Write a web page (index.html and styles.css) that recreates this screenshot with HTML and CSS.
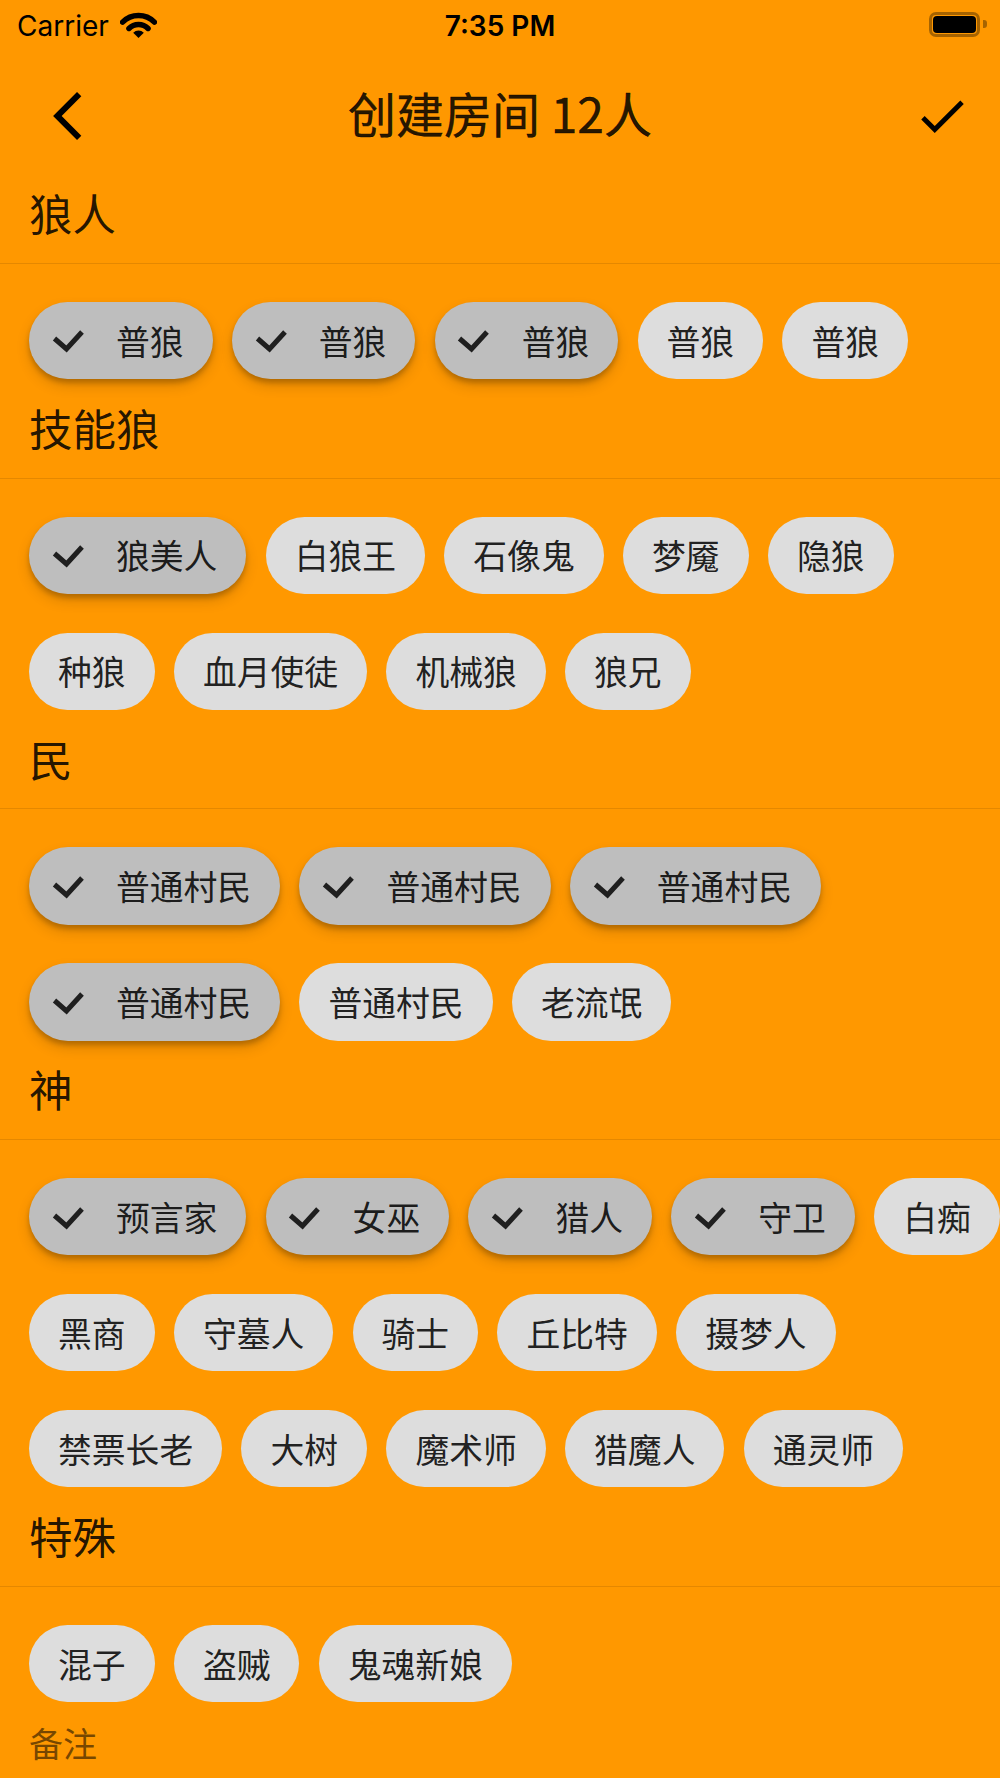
FILE: index.html
```html
<!DOCTYPE html>
<html lang="zh-CN">
<head>
<meta charset="utf-8">
<title>创建房间</title>
<link rel="stylesheet" href="styles.css">
</head>
<body>
<div class="screen">
  <div class="status">
    <div class="status-left">
      <span class="carrier">Carrier</span>
      <svg class="wifi" width="37" height="27" viewBox="0 0 37 27">
        <path d="M2.6 11.1 A22.5 22.5 0 0 1 34.4 11.1" fill="none" stroke="#000" stroke-width="5.5" stroke-linecap="round"/>
        <path d="M8.95 17.45 A13.5 13.5 0 0 1 28.05 17.45" fill="none" stroke="#000" stroke-width="5.5" stroke-linecap="round"/>
        <path d="M18.5 27 L13.2 21.7 A7.5 7.5 0 0 1 23.8 21.7 Z" fill="#000"/>
      </svg>
    </div>
    <span class="time">7:35 PM</span>
    <div class="status-right">
      <div class="battery"><div class="battery-fill"></div></div>
      <div class="battery-nub"></div>
    </div>
  </div>

  <div class="nav">
    <div class="nav-lead">
      <svg width="58" height="58" viewBox="0 0 24 24"><path d="M17.51 3.87L15.73 2.1 5.84 12l9.9 9.9 1.77-1.77L9.38 12l8.13-8.13z" fill="#000"/></svg>
    </div>
    <div class="nav-title">创建房间 12人</div>
    <div class="nav-action">
      <svg width="58" height="58" viewBox="0 0 24 24"><path d="M9 16.17L4.83 12l-1.42 1.41L9 19 21 7l-1.41-1.41z" fill="#000"/></svg>
    </div>
  </div>

  <div class="section-title">狼人</div>
  <div class="divider"></div>
  <div class="chips">
    <span class="chip sel"><svg class="tick" viewBox="0 0 58 58"><polyline points="15.5,27.5 27.5,38 43,21"/></svg>普狼</span>
    <span class="chip sel"><svg class="tick" viewBox="0 0 58 58"><polyline points="15.5,27.5 27.5,38 43,21"/></svg>普狼</span>
    <span class="chip sel"><svg class="tick" viewBox="0 0 58 58"><polyline points="15.5,27.5 27.5,38 43,21"/></svg>普狼</span>
    <span class="chip">普狼</span>
    <span class="chip">普狼</span>
  </div>

  <div class="section-title">技能狼</div>
  <div class="divider"></div>
  <div class="chips">
    <span class="chip sel"><svg class="tick" viewBox="0 0 58 58"><polyline points="15.5,27.5 27.5,38 43,21"/></svg>狼美人</span>
    <span class="chip">白狼王</span>
    <span class="chip">石像鬼</span>
    <span class="chip">梦魇</span>
    <span class="chip">隐狼</span>
    <span class="chip">种狼</span>
    <span class="chip">血月使徒</span>
    <span class="chip">机械狼</span>
    <span class="chip">狼兄</span>
  </div>

  <div class="section-title">民</div>
  <div class="divider"></div>
  <div class="chips">
    <span class="chip sel"><svg class="tick" viewBox="0 0 58 58"><polyline points="15.5,27.5 27.5,38 43,21"/></svg>普通村民</span>
    <span class="chip sel"><svg class="tick" viewBox="0 0 58 58"><polyline points="15.5,27.5 27.5,38 43,21"/></svg>普通村民</span>
    <span class="chip sel"><svg class="tick" viewBox="0 0 58 58"><polyline points="15.5,27.5 27.5,38 43,21"/></svg>普通村民</span>
    <span class="chip sel"><svg class="tick" viewBox="0 0 58 58"><polyline points="15.5,27.5 27.5,38 43,21"/></svg>普通村民</span>
    <span class="chip">普通村民</span>
    <span class="chip">老流氓</span>
  </div>

  <div class="section-title">神</div>
  <div class="divider"></div>
  <div class="chips">
    <span class="chip sel"><svg class="tick" viewBox="0 0 58 58"><polyline points="15.5,27.5 27.5,38 43,21"/></svg>预言家</span>
    <span class="chip sel"><svg class="tick" viewBox="0 0 58 58"><polyline points="15.5,27.5 27.5,38 43,21"/></svg>女巫</span>
    <span class="chip sel"><svg class="tick" viewBox="0 0 58 58"><polyline points="15.5,27.5 27.5,38 43,21"/></svg>猎人</span>
    <span class="chip sel"><svg class="tick" viewBox="0 0 58 58"><polyline points="15.5,27.5 27.5,38 43,21"/></svg>守卫</span>
    <span class="chip">白痴</span>
    <span class="chip">黑商</span>
    <span class="chip">守墓人</span>
    <span class="chip">骑士</span>
    <span class="chip">丘比特</span>
    <span class="chip">摄梦人</span>
    <span class="chip">禁票长老</span>
    <span class="chip">大树</span>
    <span class="chip">魔术师</span>
    <span class="chip">猎魔人</span>
    <span class="chip">通灵师</span>
  </div>

  <div class="section-title">特殊</div>
  <div class="divider"></div>
  <div class="chips">
    <span class="chip">混子</span>
    <span class="chip">盗贼</span>
    <span class="chip">鬼魂新娘</span>
  </div>

  <div class="note">备注</div>
</div>
</body>
</html>
```

FILE: styles.css
```css
html, body {
  margin: 0;
  padding: 0;
}
body {
  background: #ff9800;
  width: 1000px;
  height: 1778px;
  overflow: hidden;
  font-family: "Noto Sans CJK SC", "Noto Sans", sans-serif;
}
.screen {
  width: 1000px;
  height: 1778px;
  overflow: hidden;
  background: #ff9800;
}

/* status bar */
.status {
  height: 48px;
  box-sizing: border-box;
  padding-top: 3px;
  display: grid;
  grid-template-columns: 1fr auto 1fr;
  align-items: center;
  font-family: "Inter", "Liberation Sans", sans-serif;
  color: #000;
}
.status-left {
  display: flex;
  align-items: center;
  padding-left: 17px;
}
.carrier {
  font-size: 28px;
  font-weight: 400;
  line-height: 1;
}
.wifi {
  margin-left: 11px;
  margin-top: -3px;
}
.time {
  font-size: 28px;
  font-weight: 600;
  line-height: 1;
}
.status-right {
  display: flex;
  justify-content: flex-end;
  align-items: center;
  padding-right: 13px;
  margin-top: -3px;
}
.battery {
  width: 51px;
  height: 25px;
  box-sizing: border-box;
  border: 3px solid rgba(0, 0, 0, 0.35);
  border-radius: 7px;
  padding: 1px;
}
.battery-fill {
  width: 100%;
  height: 100%;
  background: #000;
  border-radius: 4px;
}
.battery-nub {
  width: 4px;
  height: 8px;
  margin-left: 3px;
  background: rgba(0, 0, 0, 0.35);
  border-radius: 0 3px 3px 0;
}

/* app bar */
.nav {
  height: 135px;
  display: grid;
  grid-template-columns: 135px 1fr 135px;
  align-items: center;
}
.nav-lead {
  display: flex;
  justify-content: center;
  align-items: center;
}
.nav-lead svg, .nav-action svg {
  display: block;
}
.nav-title {
  text-align: center;
  font-size: 48px;
  font-weight: 400;
  line-height: 1;
  margin-top: -8px;
  color: rgba(0, 0, 0, 0.87);
  -webkit-text-stroke: 0.4px rgba(0, 0, 0, 0.87);
}
.nav-action {
  justify-self: end;
  width: 116px;
  display: flex;
  justify-content: center;
}

/* sections */
.section-title {
  height: 60.4px;
  line-height: 60.4px;
  padding-left: 29px;
  font-size: 43.5px;
  color: rgba(0, 0, 0, 0.87);
}
.divider {
  height: 1px;
  margin: 19.3px 0 18.3px;
  background: rgba(0, 0, 0, 0.1);
}
.chips {
  width: 975px;
  margin-left: 29px;
  padding: 19.8px 0 18.8px;
  display: flex;
  flex-wrap: wrap;
  column-gap: 19.3px;
  row-gap: 38.6px;
}
.chip {
  height: 77.3px;
  box-sizing: border-box;
  padding: 0 29px;
  border-radius: 39px;
  background: #dddddd;
  display: inline-flex;
  align-items: center;
  font-size: 33.8px;
  line-height: 1;
  color: rgba(0, 0, 0, 0.87);
  white-space: nowrap;
}
.chip.sel {
  padding-left: 9.66px;
  background: #bebebe;
  box-shadow: 0 4px 5px rgba(0, 0, 0, 0.2), 0 7px 14px rgba(0, 0, 0, 0.14);
}
.tick {
  width: 58px;
  height: 58px;
  margin-right: 19.3px;
  flex: none;
}
.tick polyline {
  fill: none;
  stroke: #1f1f1f;
  stroke-width: 5;
  stroke-linejoin: miter;
}

.note {
  padding: 2px 0 0 29px;
  font-size: 34px;
  line-height: 40px;
  color: rgba(0, 0, 0, 0.54);
}
```
